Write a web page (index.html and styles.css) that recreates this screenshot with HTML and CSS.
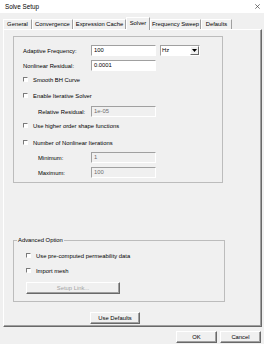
FILE: index.html
```html
<!DOCTYPE html>
<html>
<head>
<meta charset="utf-8">
<title>Solve Setup</title>
<link rel="stylesheet" href="styles.css">
</head>
<body>
<div class="window">
  <div class="titlebar">
    <span class="title">Solve Setup</span>
    <svg class="close" width="5" height="5" viewBox="0 0 5 5"><path d="M0.3 0.3L4.7 4.7M4.7 0.3L0.3 4.7" stroke="#444" stroke-width="0.7" fill="none"/></svg>
  </div>
  <div class="tabs">
    <div class="tab t-general">General</div>
    <div class="tab t-conv">Convergence</div>
    <div class="tab t-expr">Expression Cache</div>
    <div class="tab t-solver active">Solver</div>
    <div class="tab t-freq">Frequency Sweep</div>
    <div class="tab t-def">Defaults</div>
  </div>
  <div class="page">
    <div class="group main">
      <div class="row">
        <span class="label">Adaptive Frequency:</span>
        <span class="field">100</span>
        <span class="select"><span class="sel-text">Hz</span><span class="sel-btn"><svg width="5" height="3" viewBox="0 0 5 3"><path d="M0 0H5L2.5 3Z" fill="#000"/></svg></span></span>
      </div>
      <div class="row g4">
        <span class="label">Nonlinear Residual:</span>
        <span class="field">0.0001</span>
      </div>
      <div class="row g3">
        <span class="box"></span><span>Smooth BH Curve</span>
      </div>
      <div class="row g5">
        <span class="box"></span><span>Enable Iterative Solver</span>
      </div>
      <div class="row g5 indent">
        <span class="label">Relative Residual:</span>
        <span class="field disabled">1e-05</span>
      </div>
      <div class="row g3">
        <span class="box"></span><span>Use higher order shape functions</span>
      </div>
      <div class="row g6">
        <span class="box"></span><span>Number of Nonlinear Iterations</span>
      </div>
      <div class="row g4 indent">
        <span class="label">Minimum:</span>
        <span class="field disabled">1</span>
      </div>
      <div class="row g4 indent">
        <span class="label">Maximum:</span>
        <span class="field disabled">100</span>
      </div>
    </div>

    <fieldset class="adv">
      <legend>Advanced Option</legend>
      <div class="row g6 sub">
        <span class="box"></span><span>Use pre-computed permeability data</span>
      </div>
      <div class="row g4 sub">
        <span class="box"></span><span>Import mesh</span>
      </div>
      <div class="btn setup">Setup Link...</div>
    </fieldset>

    <div class="btn defaults">Use Defaults</div>
  </div>
  <div class="footer">
    <div class="btn ok">OK</div>
    <div class="btn cancel">Cancel</div>
  </div>
</div>
</body>
</html>
```

FILE: styles.css
```css
* { box-sizing: border-box; }
html, body { margin: 0; padding: 0; }
body {
  width: 264px;
  height: 344px;
  overflow: hidden;
  background: #f0f0f0;
  font-family: "Liberation Sans", Arial, sans-serif;
  font-size: 5.85px;
  color: #000;
}
.window { width: 264px; height: 344px; }

.titlebar {
  height: 13px;
  background: #fff;
  display: flex;
  align-items: center;
  justify-content: space-between;
  padding: 0 4px 0 5px;
}
.title { font-size: 6.3px; line-height: 13px; }
.close { display: block; }

.tabs {
  display: flex;
  align-items: flex-end;
  height: 12px;
  margin-top: 4px;
  padding-left: 3px;
}
.tab {
  height: 10px;
  line-height: 9px;
  text-align: center;
  white-space: nowrap;
  border-top: 1px solid #fff;
  border-left: 1px solid #fff;
  border-right: 1px solid #a0a0a0;
}
.tab.active {
  height: 13px;
  line-height: 11px;
  margin-bottom: -1px;
  position: relative;
  z-index: 1;
  background: #f0f0f0;
}
.t-general { width: 29px; }
.t-conv { width: 41px; }
.t-expr { width: 53px; }
.t-solver { width: 24px; }
.t-freq { width: 51px; }
.t-def { width: 31px; }

.page {
  margin-left: 3px;
  width: 259px;
  height: 298px;
  border: 1px solid;
  border-color: #fff #696969 #696969 #fff;
  box-shadow: inset -1px -1px 0 #a0a0a0;
  display: flex;
  flex-direction: column;
  align-items: flex-start;
}

.group { border: 1px solid #bcbcbc; }
.group.main {
  margin: 6px 0 0 9px;
  width: 210px;
  height: 147px;
  padding: 8px 0 0 9px;
}

.row {
  display: flex;
  align-items: center;
  height: 11px;
  white-space: nowrap;
}
.g3 { margin-top: 3px; }
.g4 { margin-top: 4px; }
.g5 { margin-top: 5px; }
.g6 { margin-top: 6px; }

.label { width: 68px; }
.indent { padding-left: 15px; }
.indent .label { width: 53px; }

.field {
  width: 65px;
  height: 11px;
  background: #fff;
  border: 1px solid;
  border-color: #a0a0a0 #fff #fff #a0a0a0;
  padding-left: 2px;
  line-height: 9px;
}
.field.disabled { background: #f0f0f0; color: #6d6d6d; }

.select {
  margin-left: 4px;
  width: 40px;
  height: 11px;
  background: #fff;
  border: 1px solid;
  border-color: #a0a0a0 #fff #fff #a0a0a0;
  display: flex;
}
.sel-text { flex: 1; padding-left: 1px; line-height: 9px; }
.sel-btn {
  width: 9px;
  border: 1px solid;
  border-color: #fff #696969 #696969 #fff;
  background: #f0f0f0;
  display: flex;
  align-items: center;
  justify-content: center;
}
.sel-btn svg { display: block; }

.box {
  width: 5px;
  height: 5px;
  border: 1px solid;
  border-color: #7a7a7a #fff #fff #7a7a7a;
  background: #fff;
  margin-right: 5px;
  flex: none;
}

.adv {
  margin: 53px 0 0 9px;
  width: 212px;
  padding: 0 0 7px 0;
  border: 1px solid #bcbcbc;
  min-width: 0;
}
.adv legend {
  margin-left: 3px;
  padding: 0 1px;
  line-height: 8px;
}
.sub { margin-left: 12px; }

.btn {
  height: 12px;
  display: flex;
  align-items: center;
  justify-content: center;
  border: 1px solid;
  border-color: #fff #696969 #696969 #fff;
  box-shadow: inset -1px -1px 0 #a0a0a0;
  background: #f0f0f0;
  white-space: nowrap;
}
.setup {
  margin: 6px 0 0 12px;
  width: 94px;
  color: #a3a3a3;
}
.defaults {
  margin: 10px 0 0 86px;
  width: 50px;
}
.footer {
  display: flex;
  justify-content: flex-end;
  gap: 3px;
  margin-top: 4px;
  padding-right: 3px;
}
.ok, .cancel { width: 41px; }
```
